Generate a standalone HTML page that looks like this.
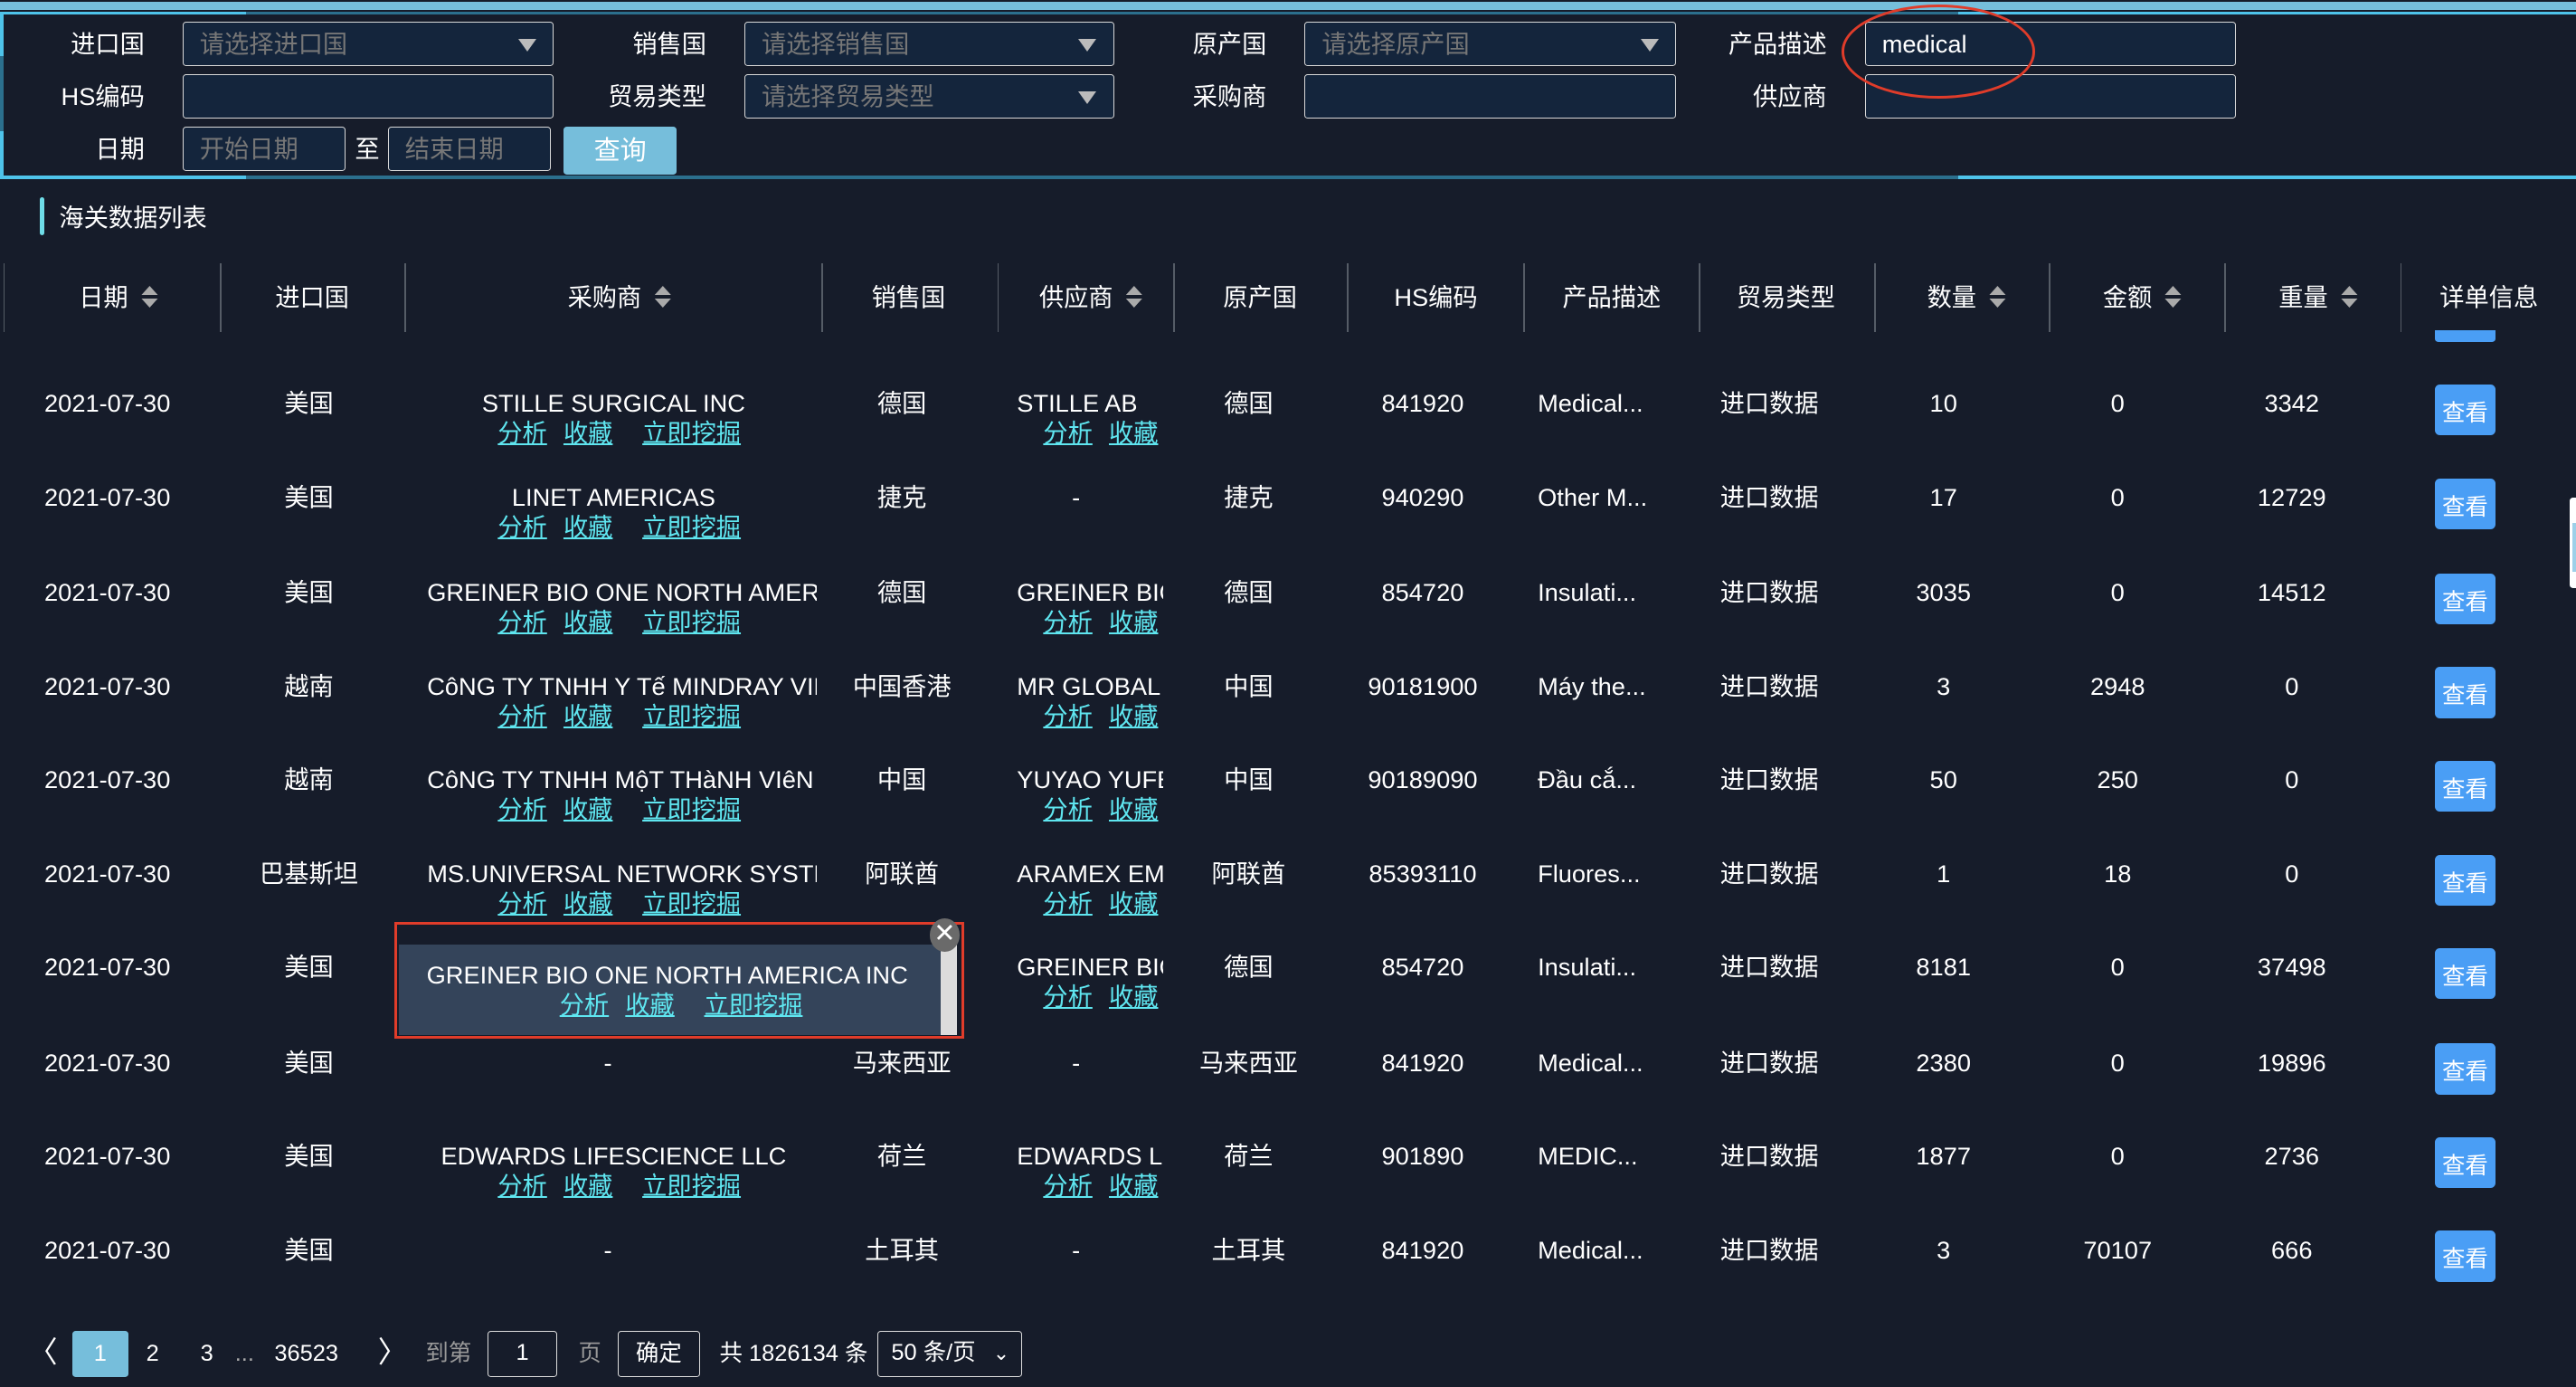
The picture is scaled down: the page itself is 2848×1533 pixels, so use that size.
<!DOCTYPE html>
<html><head><meta charset="utf-8"><style>
html,body{margin:0;padding:0;background:#161c2a;overflow:hidden;}
#w{position:relative;width:1568px;height:844px;zoom:1.81633;background:#161c2a;color:#fff;font-family:"Liberation Sans","Noto Sans CJK SC",sans-serif;font-size:15px;overflow:hidden;}
.a{position:absolute;white-space:nowrap;}
.lb{position:absolute;text-align:right;width:90px;line-height:28px;font-size:15px;}
.in{position:absolute;height:26px;border:1px solid #d9d9d9;border-radius:2px;background:#14253c;color:#777;line-height:26px;padding-left:10px;box-sizing:content-box;font-size:15px;}
.tri{position:absolute;right:10px;top:10px;width:0;height:0;border-left:6px solid transparent;border-right:6px solid transparent;border-top:8px solid #bbb;}
.hd{position:absolute;top:171px;line-height:20px;transform:translateX(-50%);white-space:nowrap;}
.sep{position:absolute;top:160px;width:1px;height:42px;background:#555c66;}
.sort{display:inline-block;vertical-align:middle;margin-left:8px;width:10px;height:14px;position:relative;top:-1px;}
.sort:before{content:"";position:absolute;left:0;top:0;border-left:5px solid transparent;border-right:5px solid transparent;border-bottom:6px solid #aaa;}
.sort:after{content:"";position:absolute;left:0;top:8px;border-left:5px solid transparent;border-right:5px solid transparent;border-top:6px solid #aaa;}
.r{position:absolute;left:0;width:1568px;height:40px;}
.r .a{top:0;line-height:18px;}
.c{transform:translateX(-50%);}
.bu{position:absolute;left:250px;width:247px;overflow:hidden;top:0;line-height:18px;white-space:nowrap;text-align:left;padding-left:10px;box-sizing:border-box;}
.bu.ct{text-align:center;padding-left:0;}
.su{position:absolute;left:610px;width:98px;overflow:hidden;top:0;line-height:18px;white-space:nowrap;text-align:left;padding-left:9px;box-sizing:border-box;}
.ll{position:absolute;left:53px;top:18px;text-align:left;}
.sl{position:absolute;left:25px;top:18px;text-align:left;}
.lk{color:#5fe6f0;text-decoration:underline;}
.g1{display:inline-block;width:10px}
.g2{display:inline-block;width:18px}
.bt{position:absolute;left:1482px;top:-3px;width:37px;height:31px;background:#4a9ef5;border-radius:3px;font-size:14px;line-height:36px;text-align:center;}
</style></head><body><div id="w">
<div class="a" style="left:0;top:1px;width:1568px;height:5px;background:#76bedb"></div>
<div class="a" style="left:0;top:7px;width:1568px;height:2px;background:#2b6f8d"></div>
<div class="a" style="left:0;top:7px;width:150px;height:2px;background:#4ec3ea"></div>
<div class="a" style="left:1192px;top:7px;width:376px;height:2px;background:#4ec3ea"></div>
<div class="a" style="left:0;top:107px;width:1568px;height:2px;background:#2b6f8d"></div>
<div class="a" style="left:0;top:107px;width:150px;height:2px;background:#4ec3ea"></div>
<div class="a" style="left:1192px;top:107px;width:376px;height:2px;background:#4ec3ea"></div>
<div class="a" style="left:0;top:7px;width:2px;height:102px;background:#2b6f8d"></div>
<div class="a" style="left:0;top:7px;width:2px;height:27px;background:#4ec3ea"></div>
<div class="a" style="left:0;top:80px;width:2px;height:29px;background:#4ec3ea"></div>

<div class="lb" style="left:-2px;top:13px">进口国</div>
<div class="in" style="left:111px;top:13px;width:215px">请选择进口国<div class="tri"></div></div>
<div class="lb" style="left:-2px;top:45px">HS编码</div>
<div class="in" style="left:111px;top:45px;width:215px"></div>
<div class="lb" style="left:-2px;top:77px">日期</div>
<div class="in" style="left:111px;top:77px;width:88px">开始日期</div>
<div class="a" style="left:216px;top:77px;line-height:28px">至</div>
<div class="in" style="left:236px;top:77px;width:88px">结束日期</div>
<div class="a" style="left:343px;top:77px;width:69px;height:29px;background:#76bedb;border-radius:2px;text-align:center;line-height:30px;font-size:16px">查询</div>

<div class="lb" style="left:340px;top:13px">销售国</div>
<div class="in" style="left:453px;top:13px;width:214px">请选择销售国<div class="tri"></div></div>
<div class="lb" style="left:340px;top:45px">贸易类型</div>
<div class="in" style="left:453px;top:45px;width:214px">请选择贸易类型<div class="tri"></div></div>

<div class="lb" style="left:681px;top:13px">原产国</div>
<div class="in" style="left:794px;top:13px;width:215px">请选择原产国<div class="tri"></div></div>
<div class="lb" style="left:681px;top:45px">采购商</div>
<div class="in" style="left:794px;top:45px;width:215px"></div>

<div class="lb" style="left:1022px;top:13px">产品描述</div>
<div class="in" style="left:1135px;top:13px;width:215px;color:#fff">medical</div>
<div class="lb" style="left:1022px;top:45px">供应商</div>
<div class="in" style="left:1135px;top:45px;width:215px"></div>
<div class="a" style="left:1121px;top:3px;width:118px;height:57px;border:2px solid #e03c2a;border-radius:50%;box-sizing:border-box"></div>

<div class="a" style="left:24px;top:120px;width:3px;height:23px;background:#6fdde8;border-radius:2px"></div>
<div class="a" style="left:36px;top:123px;line-height:20px">海关数据列表</div>

<div class="sep" style="left:2px"></div><div class="sep" style="left:134px"></div><div class="sep" style="left:246px"></div><div class="sep" style="left:500px"></div><div class="sep" style="left:607px"></div><div class="sep" style="left:714px"></div><div class="sep" style="left:820px"></div><div class="sep" style="left:927px"></div><div class="sep" style="left:1034px"></div><div class="sep" style="left:1141px"></div><div class="sep" style="left:1247px"></div><div class="sep" style="left:1354px"></div><div class="sep" style="left:1461px"></div>
<div class="hd" style="left:72px">日期<span class="sort"></span></div>
<div class="hd" style="left:190px">进口国</div>
<div class="hd" style="left:377px">采购商<span class="sort"></span></div>
<div class="hd" style="left:553px">销售国</div>
<div class="hd" style="left:664px">供应商<span class="sort"></span></div>
<div class="hd" style="left:767px">原产国</div>
<div class="hd" style="left:874px">HS编码</div>
<div class="hd" style="left:981px">产品描述</div>
<div class="hd" style="left:1087px">贸易类型</div>
<div class="hd" style="left:1197px">数量<span class="sort"></span></div>
<div class="hd" style="left:1304px">金额<span class="sort"></span></div>
<div class="hd" style="left:1411px">重量<span class="sort"></span></div>
<div class="hd" style="left:1515px">详单信息</div>
<div class="a" style="left:1482px;top:201px;width:37px;height:7px;background:#4a9ef5;border-radius:0 0 2px 2px"></div>

<div class="r" style="top:237px"><span class="a" style="left:27px">2021-07-30</span><span class="a c" style="left:188px">美国</span><div class="bu ct" style="height:40px">STILLE SURGICAL INC<div class="ll"><span class="lk">分析</span><span class="g1"></span><span class="lk">收藏</span><span class="g2"></span><span class="lk">立即挖掘</span></div></div><span class="a c" style="left:549px">德国</span><div class="su" style="height:40px">STILLE AB<div class="sl"><span class="lk">分析</span><span class="g1"></span><span class="lk">收藏</span></div></div><span class="a c" style="left:760px">德国</span><span class="a c" style="left:866px">841920</span><span class="a" style="left:936px">Medical...</span><span class="a" style="left:1047px">进口数据</span><span class="a c" style="left:1183px">10</span><span class="a c" style="left:1289px">0</span><span class="a c" style="left:1395px">3342</span><div class="bt">查看</div></div>

<div class="r" style="top:294px"><span class="a" style="left:27px">2021-07-30</span><span class="a c" style="left:188px">美国</span><div class="bu ct" style="height:40px">LINET AMERICAS<div class="ll"><span class="lk">分析</span><span class="g1"></span><span class="lk">收藏</span><span class="g2"></span><span class="lk">立即挖掘</span></div></div><span class="a c" style="left:549px">捷克</span><span class="a c" style="left:655px">-</span><span class="a c" style="left:760px">捷克</span><span class="a c" style="left:866px">940290</span><span class="a" style="left:936px">Other M...</span><span class="a" style="left:1047px">进口数据</span><span class="a c" style="left:1183px">17</span><span class="a c" style="left:1289px">0</span><span class="a c" style="left:1395px">12729</span><div class="bt">查看</div></div>

<div class="r" style="top:352px"><span class="a" style="left:27px">2021-07-30</span><span class="a c" style="left:188px">美国</span><div class="bu" style="height:40px">GREINER BIO ONE NORTH AMERICA INC<div class="ll"><span class="lk">分析</span><span class="g1"></span><span class="lk">收藏</span><span class="g2"></span><span class="lk">立即挖掘</span></div></div><span class="a c" style="left:549px">德国</span><div class="su" style="height:40px">GREINER BIO<div class="sl"><span class="lk">分析</span><span class="g1"></span><span class="lk">收藏</span></div></div><span class="a c" style="left:760px">德国</span><span class="a c" style="left:866px">854720</span><span class="a" style="left:936px">Insulati...</span><span class="a" style="left:1047px">进口数据</span><span class="a c" style="left:1183px">3035</span><span class="a c" style="left:1289px">0</span><span class="a c" style="left:1395px">14512</span><div class="bt">查看</div></div>

<div class="r" style="top:409px"><span class="a" style="left:27px">2021-07-30</span><span class="a c" style="left:188px">越南</span><div class="bu" style="height:40px">CôNG TY TNHH Y Tế MINDRAY VIỆT NAM<div class="ll"><span class="lk">分析</span><span class="g1"></span><span class="lk">收藏</span><span class="g2"></span><span class="lk">立即挖掘</span></div></div><span class="a c" style="left:549px">中国香港</span><div class="su" style="height:40px">MR GLOBAL<div class="sl"><span class="lk">分析</span><span class="g1"></span><span class="lk">收藏</span></div></div><span class="a c" style="left:760px">中国</span><span class="a c" style="left:866px">90181900</span><span class="a" style="left:936px">Máy the...</span><span class="a" style="left:1047px">进口数据</span><span class="a c" style="left:1183px">3</span><span class="a c" style="left:1289px">2948</span><span class="a c" style="left:1395px">0</span><div class="bt">查看</div></div>

<div class="r" style="top:466px"><span class="a" style="left:27px">2021-07-30</span><span class="a c" style="left:188px">越南</span><div class="bu" style="height:40px">CôNG TY TNHH MộT THàNH VIêN MỘT<div class="ll"><span class="lk">分析</span><span class="g1"></span><span class="lk">收藏</span><span class="g2"></span><span class="lk">立即挖掘</span></div></div><span class="a c" style="left:549px">中国</span><div class="su" style="height:40px">YUYAO YUFENG<div class="sl"><span class="lk">分析</span><span class="g1"></span><span class="lk">收藏</span></div></div><span class="a c" style="left:760px">中国</span><span class="a c" style="left:866px">90189090</span><span class="a" style="left:936px">Đầu cắ...</span><span class="a" style="left:1047px">进口数据</span><span class="a c" style="left:1183px">50</span><span class="a c" style="left:1289px">250</span><span class="a c" style="left:1395px">0</span><div class="bt">查看</div></div>

<div class="r" style="top:523px"><span class="a" style="left:27px">2021-07-30</span><span class="a c" style="left:188px">巴基斯坦</span><div class="bu" style="height:40px">MS.UNIVERSAL NETWORK SYSTEMS<div class="ll"><span class="lk">分析</span><span class="g1"></span><span class="lk">收藏</span><span class="g2"></span><span class="lk">立即挖掘</span></div></div><span class="a c" style="left:549px">阿联酋</span><div class="su" style="height:40px">ARAMEX EMIRATES<div class="sl"><span class="lk">分析</span><span class="g1"></span><span class="lk">收藏</span></div></div><span class="a c" style="left:760px">阿联酋</span><span class="a c" style="left:866px">85393110</span><span class="a" style="left:936px">Fluores...</span><span class="a" style="left:1047px">进口数据</span><span class="a c" style="left:1183px">1</span><span class="a c" style="left:1289px">18</span><span class="a c" style="left:1395px">0</span><div class="bt">查看</div></div>

<div class="r" style="top:580px"><span class="a" style="left:27px">2021-07-30</span><span class="a c" style="left:188px">美国</span><span class="a c" style="left:549px">德国</span><div class="su" style="height:40px">GREINER BIO<div class="sl"><span class="lk">分析</span><span class="g1"></span><span class="lk">收藏</span></div></div><span class="a c" style="left:760px">德国</span><span class="a c" style="left:866px">854720</span><span class="a" style="left:936px">Insulati...</span><span class="a" style="left:1047px">进口数据</span><span class="a c" style="left:1183px">8181</span><span class="a c" style="left:1289px">0</span><span class="a c" style="left:1395px">37498</span><div class="bt">查看</div></div>

<div class="r" style="top:638px"><span class="a" style="left:27px">2021-07-30</span><span class="a c" style="left:188px">美国</span><span class="a c" style="left:370px">-</span><span class="a c" style="left:549px">马来西亚</span><span class="a c" style="left:655px">-</span><span class="a c" style="left:760px">马来西亚</span><span class="a c" style="left:866px">841920</span><span class="a" style="left:936px">Medical...</span><span class="a" style="left:1047px">进口数据</span><span class="a c" style="left:1183px">2380</span><span class="a c" style="left:1289px">0</span><span class="a c" style="left:1395px">19896</span><div class="bt">查看</div></div>

<div class="r" style="top:695px"><span class="a" style="left:27px">2021-07-30</span><span class="a c" style="left:188px">美国</span><div class="bu ct" style="height:40px">EDWARDS LIFESCIENCE LLC<div class="ll"><span class="lk">分析</span><span class="g1"></span><span class="lk">收藏</span><span class="g2"></span><span class="lk">立即挖掘</span></div></div><span class="a c" style="left:549px">荷兰</span><div class="su" style="height:40px">EDWARDS LIFESCIENCES<div class="sl"><span class="lk">分析</span><span class="g1"></span><span class="lk">收藏</span></div></div><span class="a c" style="left:760px">荷兰</span><span class="a c" style="left:866px">901890</span><span class="a" style="left:936px">MEDIC...</span><span class="a" style="left:1047px">进口数据</span><span class="a c" style="left:1183px">1877</span><span class="a c" style="left:1289px">0</span><span class="a c" style="left:1395px">2736</span><div class="bt">查看</div></div>

<div class="r" style="top:752px"><span class="a" style="left:27px">2021-07-30</span><span class="a c" style="left:188px">美国</span><span class="a c" style="left:370px">-</span><span class="a c" style="left:549px">土耳其</span><span class="a c" style="left:655px">-</span><span class="a c" style="left:760px">土耳其</span><span class="a c" style="left:866px">841920</span><span class="a" style="left:936px">Medical...</span><span class="a" style="left:1047px">进口数据</span><span class="a c" style="left:1183px">3</span><span class="a c" style="left:1289px">70107</span><span class="a c" style="left:1395px">666</span><div class="bt">查看</div></div>

<div class="a" style="left:240px;top:561px;width:347px;height:71px;border:2px solid #e03c2a;box-sizing:border-box;background:#161c2a">
 <div class="a" style="left:1px;top:12px;width:330px;height:55px;background:#34445a"></div>
 <div class="a" style="left:331px;top:12px;width:10px;height:55px;background:#dcdcdc"></div>
 <div class="a" style="left:18px;top:22px;line-height:18px;width:300px;text-align:left">GREINER BIO ONE NORTH AMERICA INC<br><span style="padding-left:81px"><span class="lk">分析</span><span class="g1"></span><span class="lk">收藏</span><span class="g2"></span><span class="lk">立即挖掘</span></span></div>
</div>
<div class="a" style="left:566px;top:559px;width:18px;height:20px;border-radius:50%;background:#6a6a6a;color:#fff;font-size:16px;line-height:19px;text-align:center">✕</div>

<div class="a" style="left:1564px;top:303px;width:6px;height:55px;background:#fff;border-radius:2px"></div>
<div class="a" style="left:1566px;top:318px;width:4px;height:30px;background:#9dd0e8"></div>

<div class="a" style="left:17px;top:813px;font-size:18px;line-height:20px">〈</div>
<div class="a" style="left:44px;top:810px;width:34px;height:28px;background:#76bedb;border-radius:2px;text-align:center;line-height:28px;font-size:14px">1</div>
<div class="a" style="left:89px;top:814px;font-size:14px;line-height:20px">2</div>
<div class="a" style="left:122px;top:814px;font-size:14px;line-height:20px">3</div>
<div class="a" style="left:143px;top:814px;font-size:14px;line-height:20px;color:#aaa">...</div>
<div class="a" style="left:167px;top:814px;font-size:14px;line-height:20px">36523</div>
<div class="a" style="left:230px;top:813px;font-size:18px;line-height:20px">〉</div>
<div class="a" style="left:259px;top:814px;font-size:14px;line-height:20px;color:#999">到第</div>
<div class="a" style="left:297px;top:810px;width:42px;height:28px;border:1px solid #ddd;border-radius:2px;box-sizing:border-box;text-align:center;line-height:26px;font-size:14px">1</div>
<div class="a" style="left:352px;top:814px;font-size:14px;line-height:20px;color:#999">页</div>
<div class="a" style="left:376px;top:810px;width:50px;height:28px;border:1px solid #ddd;border-radius:2px;box-sizing:border-box;text-align:center;line-height:27px;font-size:14px">确定</div>
<div class="a" style="left:438px;top:814px;font-size:14px;line-height:20px">共 1826134 条</div>
<div class="a" style="left:534px;top:810px;width:88px;height:28px;border:1px solid #ddd;border-radius:2px;box-sizing:border-box;line-height:26px;font-size:14px;padding-left:8px">50 条/页<span style="position:absolute;right:7px;top:0;font-size:12px">&#8964;</span></div>
</div></body></html>
